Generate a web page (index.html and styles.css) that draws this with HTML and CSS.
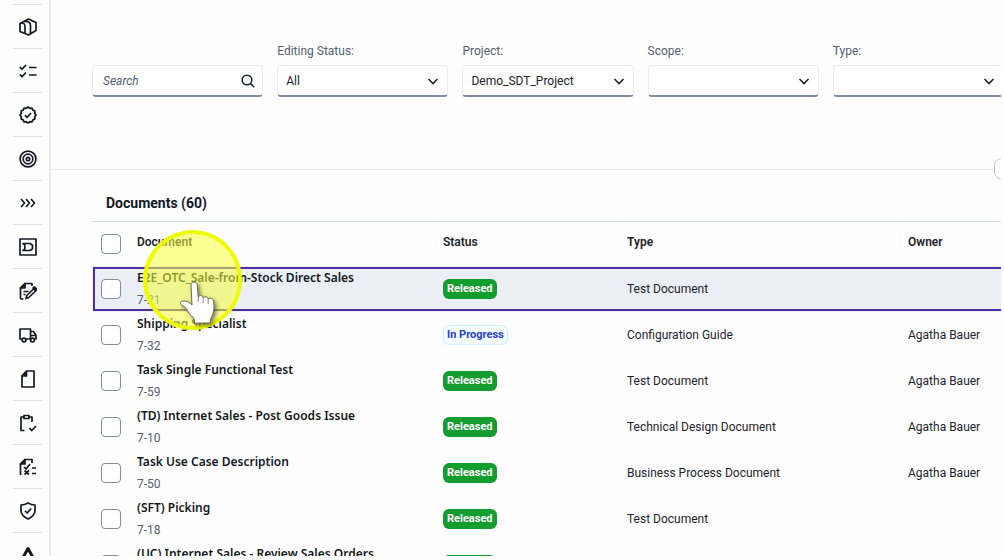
FILE: index.html
```html
<!DOCTYPE html>
<html lang="en">
<head>
<meta charset="utf-8">
<title>Documents</title>
<link rel="stylesheet" href="styles.css">
</head>
<body>
<div class="app">
  <nav class="rail" aria-label="Main">
    <a class="rail-item" href="#" aria-label="Packages"><svg class="icon" viewBox="0 0 18 18"><path d="M1 5.500 9.500 1 17 4.500v8L9.500 17 1 13.500z"/><path d="M1 5.500c3.500-.8 5 .2 5 3v7M5 3.500c3.800-.8 6.500.8 6.500 4v8.500M9.500 1"/></svg></a>
    <a class="rail-item" href="#" aria-label="Tasks"><svg class="icon" viewBox="0 0 18 18"><path d="m.8 5 2.200 2.200L7 3M.8 12.500 3 14.700l4-4.200M10 5.500h7.500M10 13h7.500"/></svg></a>
    <a class="rail-item" href="#" aria-label="Approvals"><svg class="icon" viewBox="0 0 18 18"><path d="m9 1 1.800 1.300 2.200-.2.900 2 2 .9-.2 2.200L17 9l-1.300 1.800.2 2.200-2 .9-.9 2-2.200-.2L9 17l-1.800-1.300-2.200.2-.9-2-2-.9.200-2.200L1 9l1.300-1.800L2.100 5l2-.9.900-2 2.200.2z"/><path d="m6 9.200 2.200 2.100L12 7"/></svg></a>
    <a class="rail-item" href="#" aria-label="Goals"><svg class="icon" viewBox="0 0 18 18"><circle cx="9" cy="9" r="7.900"/><circle cx="9" cy="9" r="4.800"/><circle cx="9" cy="9" r="1.700"/></svg></a>
    <a class="rail-item" href="#" aria-label="Process"><svg class="icon" viewBox="0 0 18 18"><path d="m2 5 3.500 4L2 13M7 5l3.500 4L7 13M12 5l3.500 4-3.500 4"/></svg></a>
    <a class="rail-item" href="#" aria-label="Diagram"><svg class="icon" viewBox="0 0 18 18"><path d="M1 1h16v16H1z"/><path d="M4 5.500h7L13.500 7.200v3.600l-2.500 1.700H4l1.800-1.500V7z"/></svg></a>
    <a class="rail-item" href="#" aria-label="Edit document"><svg class="icon" viewBox="0 0 18 18"><path d="M1.500 17V6L6 1.500h7V4M4.500 9.500h5M4.500 12.500h2M1.500 17h3"/><path class="solid" d="M6 1.500V6H1.500z"/><path d="m7 16.500.8-3 7.200-7 2 2-7.200 7z"/><path class="solid" d="m14 6 1.500-1L17.500 7 16.500 8.500z"/></svg></a>
    <a class="rail-item" href="#" aria-label="Transport"><svg class="icon" viewBox="0 0 18 18"><path d="M3 13H1V3h10.500v10H7M11.500 5.500h3L17 9.500V13h-1M11.500 9.500H17"/><circle cx="5" cy="14" r="1.900"/><circle cx="13.500" cy="14" r="1.900"/></svg></a>
    <a class="rail-item" href="#" aria-label="Document"><svg class="icon" viewBox="0 0 18 18"><path d="M3 17V6l4.500-5H15v16z"/><path class="solid" d="M7.500 1.500V6H3z"/></svg></a>
    <a class="rail-item" href="#" aria-label="Tests"><svg class="icon" viewBox="0 0 18 18"><path d="M5 3H2v13.500h3.500M10 3h3v5M5 1.500h5V4.500H5zM10.500 14l2.200 2.500L17 12"/></svg></a>
    <a class="rail-item" href="#" aria-label="Test results"><svg class="icon" viewBox="0 0 18 18"><path d="M1.500 17V6L6 1.500h7V5M5 9l2 2 4-5M13 10h4M13 15.500h4M5.500 12.500l4.500 4M10 12.500l-4.500 4"/><path class="solid" d="M6 1.500V6H1.500z"/></svg></a>
    <a class="rail-item" href="#" aria-label="Security"><svg class="icon" viewBox="0 0 18 18"><path d="M9 1c2.500 1.500 4.500 2 7 2v5.500c0 4-3 6.500-7 8.500-4-2-7-4.500-7-8.500V3c2.500 0 4.500-.5 7-2z"/><path d="m6 8.800 2.200 2.200L12.200 6.500"/></svg></a>
    <a class="rail-item" href="#" aria-label="Alerts"><svg class="icon" viewBox="0 0 18 18"><path class="heavy" d="M9 2.500 17 17H1z"/></svg></a>
  </nav>
  <main class="main">
    <form class="filters">
      <div class="field">
        <label class="field-label" for="q"></label>
        <div class="control">
          <input class="box search" id="q" type="search" placeholder="Search" aria-label="Search">
          <svg class="control-icon" viewBox="0 0 14 14"><circle cx="6" cy="6" r="4.800"/><path d="m9.500 9.500 3.700 3.700"/></svg>
        </div>
      </div>
      <div class="field">
        <label class="field-label" for="status">Editing Status:</label>
        <div class="control"><select class="box" id="status"><option>All</option></select><svg class="control-icon" viewBox="0 0 14 14"><path d="m2.500 5 4.500 4.500L11.500 5"/></svg></div>
      </div>
      <div class="field">
        <label class="field-label" for="project">Project:</label>
        <div class="control"><select class="box" id="project"><option>Demo_SDT_Project</option></select><svg class="control-icon" viewBox="0 0 14 14"><path d="m2.500 5 4.500 4.500L11.500 5"/></svg></div>
      </div>
      <div class="field">
        <label class="field-label" for="scope">Scope:</label>
        <div class="control"><select class="box" id="scope"><option></option></select><svg class="control-icon" viewBox="0 0 14 14"><path d="m2.500 5 4.500 4.500L11.500 5"/></svg></div>
      </div>
      <div class="field">
        <label class="field-label" for="type">Type:</label>
        <div class="control"><select class="box" id="type"><option></option></select><svg class="control-icon" viewBox="0 0 14 14"><path d="m2.500 5 4.500 4.500L11.500 5"/></svg></div>
      </div>
    </form>
    <div class="divider"><button class="collapse" aria-label="Collapse header"></button></div>
    <section class="documents">
      <h1 class="heading">Documents (60)</h1>
      <table class="table">
        <colgroup><col class="c-check"><col class="c-doc"><col class="c-status"><col class="c-type"><col></colgroup>
        <thead>
          <tr><th class="check"><input class="tick" type="checkbox" aria-label="Select all"></th><th>Document</th><th>Status</th><th>Type</th><th>Owner</th></tr>
        </thead>
        <tbody>
          <tr class="selected"><td class="check"><input class="tick" type="checkbox" aria-label="Select 7-21"></td><td class="doc"><b class="name">E2E_OTC_Sale-from-Stock Direct Sales</b><span class="code">7-21</span></td><td><span class="tag">Released</span></td><td>Test Document</td><td></td></tr>
          <tr><td class="check"><input class="tick" type="checkbox" aria-label="Select 7-32"></td><td class="doc"><b class="name">Shipping Specialist</b><span class="code">7-32</span></td><td><span class="tag progress">In Progress</span></td><td>Configuration Guide</td><td>Agatha Bauer</td></tr>
          <tr><td class="check"><input class="tick" type="checkbox" aria-label="Select 7-59"></td><td class="doc"><b class="name">Task Single Functional Test</b><span class="code">7-59</span></td><td><span class="tag">Released</span></td><td>Test Document</td><td>Agatha Bauer</td></tr>
          <tr><td class="check"><input class="tick" type="checkbox" aria-label="Select 7-10"></td><td class="doc"><b class="name">(TD) Internet Sales - Post Goods Issue</b><span class="code">7-10</span></td><td><span class="tag">Released</span></td><td>Technical Design Document</td><td>Agatha Bauer</td></tr>
          <tr><td class="check"><input class="tick" type="checkbox" aria-label="Select 7-50"></td><td class="doc"><b class="name">Task Use Case Description</b><span class="code">7-50</span></td><td><span class="tag">Released</span></td><td>Business Process Document</td><td>Agatha Bauer</td></tr>
          <tr><td class="check"><input class="tick" type="checkbox" aria-label="Select 7-18"></td><td class="doc"><b class="name">(SFT) Picking</b><span class="code">7-18</span></td><td><span class="tag">Released</span></td><td>Test Document</td><td></td></tr>
          <tr><td class="check"><input class="tick" type="checkbox" aria-label="Select review sales orders"></td><td class="doc"><b class="name">(UC) Internet Sales - Review Sales Orders</b></td><td><span class="tag" aria-label="Released"></span></td><td></td><td></td></tr>
        </tbody>
      </table>
    </section>
  </main>
  <div class="spotlight"></div>
  <svg class="pointer" viewBox="0 0 38 46"><path d="M12 4c0-4 6-4 6.300 0l.9 12c1-2 4.500-2 5 .8 1.500-1.800 4.500-1.200 5 1.200 2-1.500 4.800-.5 5.200 2 .8 4 .9 8-.2 12-.8 3-2.700 4.500-2.700 7.500v2.500H15.500V39c-1-3.500-5-5-7-9.500-1.200-2.500-3-4-5.700-5.300-2.600-1.300-1.300-4 1.200-4.200 3-.3 6.500 1 9 4z"/><path class="crease" d="M19.200 16v5M24.200 17v5M29.200 18v5"/></svg>
</div>
</body>
</html>
```
FILE: styles.css
```css
* { box-sizing: border-box; }
body { margin: 0; background: #fff; color: #1d232b; font: 12px/16px Roboto, "Noto Sans", sans-serif; }
.app { position: relative; display: flex; height: calc(100vh - 4px); margin-right: 3px; overflow: hidden; background: #fefefe; }

.rail { flex: none; width: 51px; padding: 4px 8px 0 13px; border-right: 2px solid #e9eaee; overflow: hidden; }
.rail-item { display: flex; align-items: center; justify-content: center; width: 29px; height: 44px; border-top: 1px solid #dfe0e5; color: #151922; }
.icon { width: 18px; height: 18px; fill: none; stroke: currentColor; stroke-width: 1.7; stroke-linejoin: round; }
.solid { fill: currentColor; }
.heavy { stroke-width: 3; }

.main { flex: 1; min-width: 0; }
.filters { display: grid; grid-template-columns: repeat(5, 1fr); gap: 14px; margin: 43px -3px 0 41px; }
.field-label { display: block; height: 22px; color: #556070; }
.control { display: grid; align-items: center; }
.box { grid-area: 1 / 1; width: 100%; height: 32px; padding: 0 8px; appearance: none; border: 1px solid #e9ebf0; border-bottom: 2px solid #8089a6; border-radius: 4px; background: #fff; color: #1d232b; font: inherit; }
.search { padding: 0 10px; }
.search::placeholder { color: #556070; font-style: italic; opacity: 1; }
.control-icon { grid-area: 1 / 1; justify-self: end; width: 14px; height: 14px; margin-right: 8px; fill: none; stroke: #1d232b; stroke-width: 1.6; pointer-events: none; }

.divider { position: relative; height: 1px; margin-top: 72px; background: #e8e9ed; }
.collapse { position: absolute; top: -11px; right: -15px; width: 22px; height: 22px; padding: 0; border: 1px solid #bfc3c9; border-radius: 8px; background: #fff; }

.documents { margin-left: 41px; }
.heading { margin: 0; padding: 23px 14px 8px; color: #131820; font-size: 14px; line-height: 20px; font-weight: 700; }
.table { width: calc(100% + 20px); table-layout: fixed; border-collapse: separate; border-spacing: 0; border-top: 1px solid #d5dadd; }
.c-check { width: 37px; }
.c-doc { width: 306px; }
.c-status { width: 184px; }
.c-type { width: 281px; }
th { height: 44px; padding: 12px 7px; text-align: left; vertical-align: top; font-weight: 600; border-left: 1px solid #fafafc; }
td { height: 46px; padding: 0 7px; vertical-align: middle; border-left: 1px solid transparent; }
th:nth-child(-n+2) { border-left-color: transparent; }
th.check, td.check { padding: 0 8px; vertical-align: middle; }
.doc { vertical-align: top; }
.tick { display: block; width: 20px; height: 20px; margin: 0; appearance: none; border: 1px solid #858c95; border-radius: 4px; background: #fff; }
.selected { background: #ebeef4; outline: 2px solid #4a2fa8; outline-offset: -3px; }
.name, .code { display: block; line-height: 23px; white-space: nowrap; }
.name { color: #131820; font-family: "Noto Sans", sans-serif; font-weight: 600; }
.code { color: #556070; }
.tag { display: inline-block; min-width: 53px; min-height: 20px; padding: 0 4px; line-height: 20px; border-radius: 6px; background: #149d2f; color: #fff; font-size: 11px; font-weight: 700; white-space: nowrap; vertical-align: middle; }
.progress { background: #f3fcff; color: #2a40c8; box-shadow: inset 0 0 0 1px #d3effc; }

.spotlight { position: absolute; left: 143px; top: 230px; width: 99px; height: 100px; border: 4px solid #effa05; border-radius: 50%; background: rgba(246, 255, 60, .55); }
.pointer { position: absolute; left: 179px; top: 281px; width: 38px; height: 46px; overflow: visible; fill: #fff; stroke: #6b6c5c; stroke-width: 1; filter: drop-shadow(2px 2px 2px rgba(0, 0, 0, .5)); }
.crease { fill: none; stroke: #8b8b80; }
```
